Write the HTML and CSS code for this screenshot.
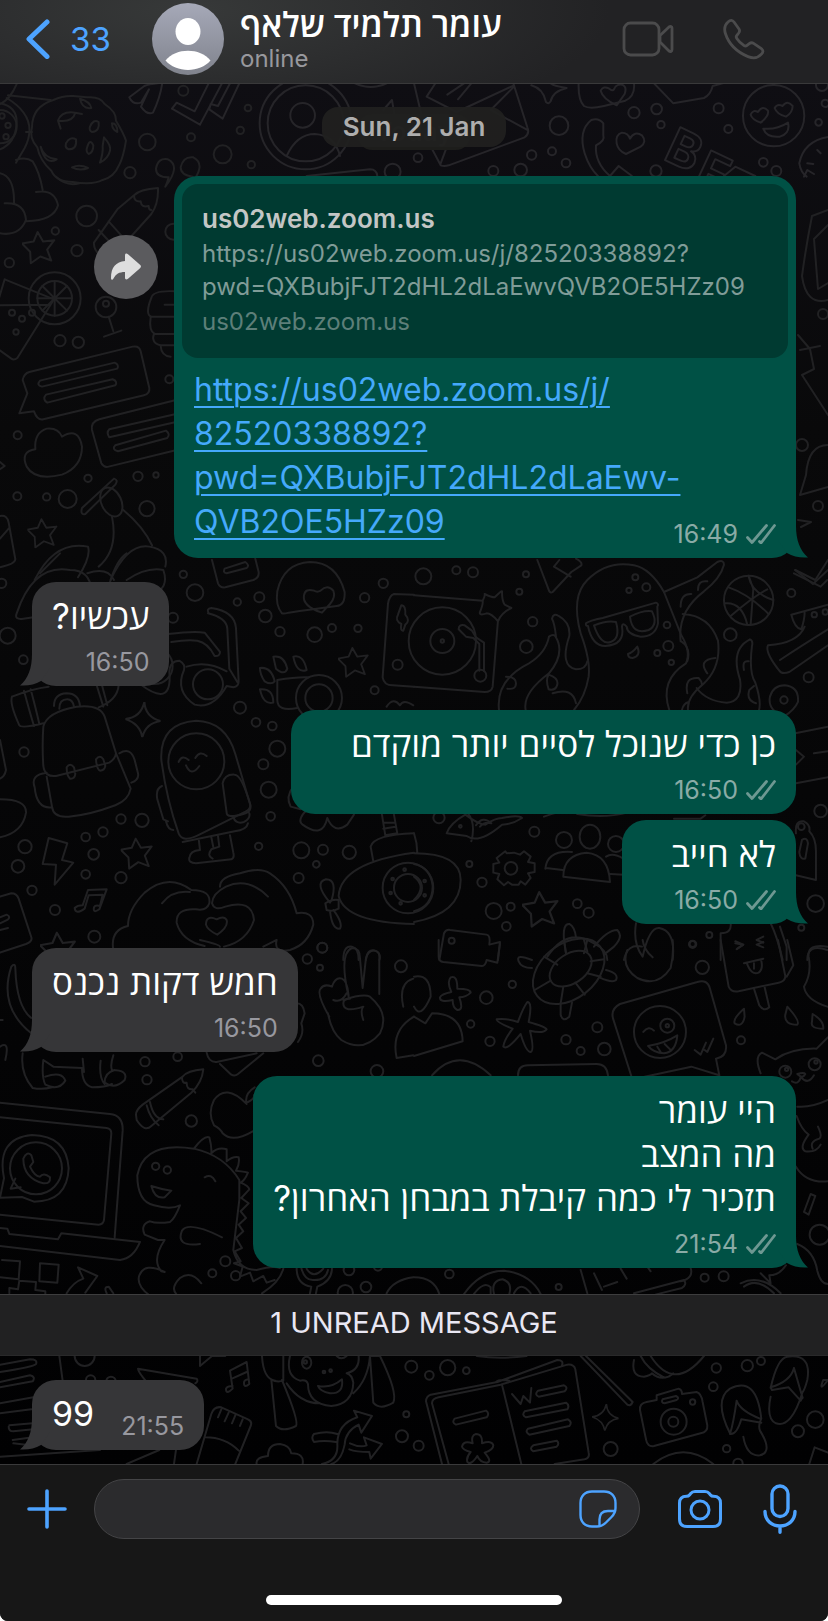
FILE: index.html
```html
<!DOCTYPE html>
<html lang="en">
<head>
<meta charset="utf-8">
<meta name="viewport" content="width=device-width, initial-scale=1">
<title>Chat</title>
<link rel="stylesheet" href="styles.css">
</head>
<body>
<svg class="defs" aria-hidden="true">
  <symbol id="ticks" viewBox="0 0 30 20"><path d="M1.500 13.500l4.500 5L20.500 1.500M13.500 17.500l1.500 1.500L28.500 1.500" fill="none" stroke="currentColor" stroke-width="2.800" stroke-linecap="round" stroke-linejoin="round"/></symbol>
  <symbol id="tail" viewBox="0 0 30 32"><path d="M18 0C18 14 22 25 30 31.500c-8 .5-15-.8-21-4.500L0 14V0z" fill="currentColor"/></symbol>
  <symbol id="star" viewBox="-50 -50 100 100" overflow="visible"><path d="M-4-46L12-18 45-22 24 6 36 38 4 26-24 46-26 12-50-12-16-18z"/></symbol>
  <symbol id="spark" viewBox="-50 -50 100 100" overflow="visible"><path d="M4-50Q6-8 50 4 8 10-2 50-8 12-50-2-6-6 4-50z"/></symbol>
</svg>
<div class="app">
  <header class="topbar">
    <a class="back" href="#">
      <svg width="26" height="40" viewBox="0 0 26 40" aria-hidden="true"><path d="M21 3L3 20l18 17.500" fill="none" stroke="currentColor" stroke-width="5" stroke-linecap="round" stroke-linejoin="round"/></svg>
      <span>33</span>
    </a>
    <svg class="avatar" viewBox="0 0 72 72" aria-hidden="true">
      <defs><linearGradient id="av" x2="0" y2="1"><stop stop-color="#a6a9b8"/><stop offset="1" stop-color="#80838d"/></linearGradient></defs>
      <circle cx="36" cy="36" r="36" fill="url(#av)"/>
      <ellipse cx="36" cy="28.500" rx="12.500" ry="13.500" fill="#fff"/>
      <path d="M13.500 57.500C24 44.500 48 44.500 58.500 57.500 48 70 24 70 13.500 57.500z" fill="#fff"/>
    </svg>
    <div class="contact">
      <h1 dir="rtl">עומר תלמיד שלאף</h1>
      <p>online</p>
    </div>
    <button class="icon" aria-label="Video call">
      <svg width="52" height="36" viewBox="0 0 52 36" fill="none" stroke="currentColor" stroke-width="2.800" stroke-linejoin="round"><rect x="2" y="2" width="35" height="32" rx="6.500"/><path d="M38 14.500l9-8.500c1.500-1 3-.5 3 1v21.500c0 2-1.500 2.500-3 1.500L38 21z"/></svg>
    </button>
    <button class="icon" aria-label="Voice call">
      <svg width="42" height="42" viewBox="0 0 42 42" fill="none" stroke="currentColor" stroke-width="2.800" stroke-linejoin="round"><path d="M5 4C7.500 1.500 9.500 2 11 4l5 7c1 1.500.8 2.500-.3 4l-2 2.600c-.8 1-.6 1.800.1 2.800 1.700 2.600 4.600 5.400 7.300 7.200 1 .6 1.700.7 2.600 0l2.600-2c1.600-1.200 2.800-1.200 4.300-.2l7.400 5c2.500 1.800 2.500 3.400.4 5.800-3.500 4-8 4.600-13.400 2.400C14 34 5.600 25.500 2.400 15.500 1 11 1.600 7 5 4z"/></svg>
    </button>
  </header>

  <main class="chat">
    <svg class="wallpaper" viewBox="0 84 828 1380" preserveAspectRatio="xMidYMin slice" aria-hidden="true">
      <g class="a" transform="scale(.3333)">
        <path d="M388 292l45-34q14-6 54-10-6 44-28 90-18 8-36-18l24-52-24 40q-24 8-35-16z"/>
        <path d="M626 250l-42 84-54-26-14 18 84 48 66-124M690 250l-36 68-22-6-4 16 40 28 50-106"/>
        <circle cx="917" cy="370" r="138"/><circle cx="917" cy="370" r="114"/><circle cx="908" cy="346" r="37"/><path d="M860 468q30-66 85-66 60 4 75 66"/>
        <circle cx="1178" cy="515" r="24"/><path d="M1065 250q48 22 95 0M920 528l190-20q20 0 22 20M1150 330l26-30 12 70"/>
      </g>
      <g class="b" transform="translate(414 0) scale(.3333)">
        <path d="M0 250l40 170 40 76q10 4 24 0l228-84q16-12 8-30L298 250M38 290l90 46 172-80M38 290l26-40M80 490l30-80M150 250l-50 34M172 250l-40 48M300 260l-70 70 110 60"/>
        <path d="M352 256q36 10 44 50 8 8 14-2 6-30 48-40-40-6-48-14"/>
        <path d="M494 250q-2 50 16 68 16 10 60 0l64-16q30-14 26-52"/><path d="M560 272q8-16 26-6 10 8 14 2 6-16 24-14 16 6 8 28l-24 34q-42-20-48-44z"/>
        <path d="M720 250l58 60 92-16q20-10 26-36l30-8"/>
        <circle cx="1079" cy="347" r="92"/><path d="M1010 344q6-16 22-8 14-22 30-4 4 16-22 36-26-10-30-24zM1082 324q8-14 24-6 14-20 30 0 0 20-20 32-28-8-34-26zM1048 386q40 4 74-18 8 32-24 42-40 4-50-24z"/>
        <path d="M588 528q-46-40-42-92 28-14 22-30v-36q-14-18-36-10-40 32-20 100 14 44 40 68M588 528l26-30 40 30"/><path d="M608 430q-4-26 16-32 18 0 24 18 14-24 36-10 16 20-4 34l-44 22q-24-10-28-32z"/>
        <text x="744" y="476" transform="rotate(25 744 476)">B</text><text x="836" y="546" transform="rotate(25 836 546)">F</text><path d="M930 528l34-28 60 28M1250 410q-80 10-94 80 4 26 22 40M1180 490l18 2M1210 450l10 10M1170 530l10-20 20 12"/>
        <circle cx="435" cy="377" r="28"/><circle cx="660" cy="338" r="17"/><circle cx="728" cy="327" r="16"/><circle cx="741" cy="374" r="11"/><circle cx="914" cy="325" r="15"/><circle cx="943" cy="387" r="12"/><circle cx="414" cy="454" r="12"/><circle cx="353" cy="465" r="14"/><circle cx="456" cy="489" r="13"/><circle cx="320" cy="510" r="19"/><circle cx="238" cy="513" r="15"/><circle cx="12" cy="473" r="13"/><circle cx="726" cy="513" r="17"/><circle cx="1048" cy="487" r="13"/><circle cx="1087" cy="513" r="15"/><circle cx="1214" cy="367" r="10"/><circle cx="1224" cy="255" r="18"/><circle cx="1234" cy="310" r="11"/>
      </g>
      <g class="c" transform="translate(0 80) scale(.3333)">
        <path d="M160 60q30-14 60-12l40 4q40-4 54 20 36 24 34 50 24 40 30 60-8 50-20 72-16 38-50 46-30 16-90 6-50 0-64-34-34-30-42-70-26-30-16-60 0-62 64-82z"/>
        <path d="M240 56q30 8 34 28-28 4-34-28zM174 122q10-30 52-24-8 30-52 24l8 24M226 98l20 4M270 140q10-24 26-14 4 28-20 30-10-4-6-16zM198 190q12-22 30-12 4 30-22 30-12-4-8-18zM262 200q8-26 18-4 0 22-14 26-10-6-4-22zM312 172q22 24 18 40-6 24-30 36 10-30 8-50zM122 200q10 34 48 38-34 20-48-38zM216 262q24-10 48 2-24 10-48-2zM336 130q16 0 16 26-16-6-16-26zM168 290q30 30 70 20"/>
        <path d="M50 12Q30 60-4 74M20 54q100 60 54 150l-26 44M24 46l128 14M78 156h18M0 70q52 10 50 60-4 60-50 78M48 240q30-10 50 4 20 30 30 86M0 280q44 10 42 90M14 370q60-4 64 50-20 50-78 40M108 336q56-10 66 40-12 46-94 48"/>
        <path d="M282 488l70-100 50-42q16-18 72-22 2 48-20 78l-54 60-70 80M296 450l50 54M326 424l54 60M402 346q0 20 20 18 2 20 24 14 0 12 8 12M282 488q-2 24 24 42"/>
        <path d="M14 598l148 60-110 176q-10 8-18 2L-8 806M-8 676l160-2M14 598l-20 66"/><circle cx="164" cy="655" r="78"/><circle cx="164" cy="655" r="52"/><path d="M164 603v104M112 655h104M127 618l74 74M201 618l-74 74"/>
        <circle cx="318" cy="681" r="31"/><circle cx="318" cy="671" r="9"/><path d="M326 710l14 44M312 770l52-18M528 634q-70-4-74 20-20 50 0 56h72M452 712q-6 40 12 50h60M462 762q-10 26 20 34h46M482 798q2 30 30 32M494 674h34"/>
        <path d="M68 900q4-20 20-24l310-76q20-4 24 14l26 110q2 18-16 22l-302 72q-18 4-28-24l-44 6 24-60zM120 902l224-54q14 6 8 18l-226 54q-18-4-6-18zM138 944l200-46q16 6 8 18l-204 52q-16-10-4-24z"/>
        <path d="M528 960l-230 58q-26 8-22 32l28 100q8 14 22 10l204-50M528 1002l-200 46q-10 10 0 24l200-46M346 1096l152-44q14 10 4 22l-148 40q-20-6-8-18z"/>
        <path d="M106 1108q-4-50 34-62 34-4 46 24 50-30 60 30 0 60-60 84-80 20-106-24-20-46 26-52z"/>
        <path d="M246 1284l96-88q14 4 4 18l-90 88q-16 4-10-18z"/><ellipse cx="334" cy="1266" rx="30" ry="46" transform="rotate(-25 334 1266)"/><path d="M336 1310q20 100-40 150M370 1290q60 50 86 106M0 1308q22-4 26 20l20 110q0 14-46 24M0 1376l28-32M104 1500q60-120 160-100 10 30-30 92M332 1500q50-110 116-100 60 10 48 60M262 1480q60-20 80 20"/>
        <svg x="66" y="452" width="102" height="102"><use href="#star"/></svg><svg x="82" y="1314" width="92" height="92"><use href="#star"/></svg>
        <path d="M496 320q6-12 10-28-38 0-38-26 6-34 36-28 40 20-8 82zM570 316q6-10 8-26-36-4-36-28 8-34 38-30 42 22-10 84zM0 1146l14 12-14 10"/>
        <circle cx="0" cy="140" r="50"/><circle cx="6" cy="108" r="8"/><circle cx="24" cy="136" r="8"/><circle cx="18" cy="170" r="8"/><circle cx="36" cy="698" r="9"/><circle cx="66" cy="716" r="9"/><circle cx="96" cy="698" r="9"/><circle cx="48" cy="756" r="8"/>
        <circle cx="442" cy="186" r="25"/><circle cx="550" cy="32" r="15"/><circle cx="573" cy="172" r="12"/><circle cx="744" cy="84" r="10"/><circle cx="721" cy="151" r="11"/><circle cx="668" cy="223" r="27"/><circle cx="754" cy="254" r="11"/><circle cx="390" cy="278" r="17"/><circle cx="260" cy="408" r="31"/><circle cx="166" cy="453" r="11"/><circle cx="231" cy="512" r="17"/><circle cx="28" cy="548" r="14"/><circle cx="180" cy="782" r="17"/><circle cx="235" cy="787" r="17"/><circle cx="520" cy="455" r="24"/><circle cx="508" cy="898" r="12"/><circle cx="53" cy="1066" r="12"/><circle cx="264" cy="1195" r="11"/><circle cx="414" cy="1189" r="14"/><circle cx="468" cy="1185" r="8"/><circle cx="52" cy="1249" r="12"/><circle cx="140" cy="1251" r="11"/><circle cx="203" cy="1257" r="27"/><circle cx="441" cy="1286" r="23"/>
      </g>
      <g class="right-edge" fill="none">
        <path d="M828 210l-16 6q-6 30-10 60 4 30 26 24M828 225l-14 14 4 50 10-6M798 335l12 14 4 20-12 6 26 40M800 350l20-4M828 445q-20 0-22 30l-6 20 28-8M798 520l13 2-10 5M828 570l-15 14-18-14"/>
        <circle cx="823" cy="314" r="5"/><circle cx="802" cy="445" r="6"/><circle cx="818" cy="506" r="5"/>
      </g>
      <g class="d" transform="translate(0 560) scale(.3333)">
        <path d="M50 160q50-150 160-130 60 0 64 60M50 160q-8 20 20 16l40-6M120 40l60-60M330 66Q350 0 380-20M380 60q60-40 110-30 14 40-10 60M636 0l18 70q6 14 22 12l84-22q18-6 16-24L766-4M674 26l62-20q14 10 4 18l-60 16q-12-2-6-14z"/>
        <path d="M846 160q-20-24-14-66Q850 10 930 6q80 0 104 90 2 40-24 42l-60 8q-60 8-84 12-14 4-20 2zM912 106q4-22 30-14 10 6 20 0 20-20 38 0 8 20-10 40l-24 26q-60-20-54-52z"/>
        <path d="M626 160q-8-14 8-16 70 10 74 60l8 160q0 16-16 18l-20-4q-40 70-96 56-60-40-32-104 6-16-14-28-28 0-30 34 10 110-88 36M624 160q56 14 58 46l6 120 24 40M560 320q60-20 120 14M504 222q80-10 110-4l46 58q0 14-16 12-20-40-52-46-30-4-78 4"/><circle cx="624" cy="373" r="45"/><circle cx="464" cy="318" r="54"/>
        <path d="M36 410q60-24 110-30M36 410q-8 20 22 86 6 10 72-6M72 392q16 60 30 106M92 388q16 60 26 104M290 376l20 64M306 376l16 60M356 376q-4 44-60 66M162 438q0-36 38-38 36 0 40 38M178 446q0-28 24-28 16 0 20 22"/>
        <path d="M130 500q10-44 100-60 70-8 84 30l34 110q-2 16-20 28l-160 40q-34 4-38-30-4-60 0-118zM140 650l16 90q4 34 50 30 60-4 140-34 40-16 46-50l-44-106M140 638q-50 6-36 44 6 64 50 60M358 580q34-20 46 20l10 40q4 20-20 28M200 622q10-16 22 0l4 20q-2 16-16 14-10-8-10-34zM288 598q12-16 22 0l6 20q-2 14-16 14-10-4-12-34z"/>
        <svg x="376" y="426" width="106" height="106"><use href="#spark"/></svg>
        <path d="M484 600q-6-110 104-118 90 2 118 100l44 150q4 14-12 22l-140 70q-50 26-62-4Q500 720 484 600z"/><circle cx="589" cy="604" r="84"/><path d="M536 606q10-24 30-6M586 594q14-24 34-6M558 616q16 36 40 2M486 678q-20 8-14 40l18 60 14 6M498 784q6 26 22 26M668 670q6-28 36-26 20 0 46 86 8 26-20 32-50 14-50-4zM700 770q6 24 32 16 20-10 16-26M744 790q-4 20-40 24l-156 32M596 836l4 34q-30 2-32 24-4 14 20 16l106-12q10-4 6-20l-10-52M634 832l6 30M654 828l4 32-24 8q-14 20 4 28"/>
        <path d="M146 834l56 16-16 50 34 8-56 66 4-60-40-2zM264 990l56-2-22 60q-20 14-16-6 4-8 18-4l8-34-42 2-12 40q-28 20-30-2 8-8 24-8z"/><svg x="362" y="832" width="98" height="98"><use href="#star"/></svg><svg x="120" y="1114" width="110" height="110"><use href="#star"/></svg>
        <path d="M340 1170q-10-60 44-72 0-50 50-100 70-60 140-8 60 0 54 40-8 24-40 18-60-4-58 40 14 54 84 70M486 1030q30-40 84-34M660 980q0-30 60-40 60-20 90 0 60 40 80 120 50-8 50 34-16 60-70 76-50 10-40-30l-40 20M804 1010q-60-60-126-30-40 20-42 50 8 24 40 10 80-24 86 40-20 64-90 80M618 1094q0-30 32-16 22-12 30 2 6 20-28 44-30-14-34-30z"/>
        <path d="M1204 136q14 0 12 28 16 18 0 30l-6 18q-10 2-6-20-20-10-10-28zM1242 104l-60-2q-14 4-18 30l-16 220q4 24 30 24l64 4"/>
        <path d="M832 360q60-10 94-8M832 360v60q0 36 60 24M820 290q32-6 42 36-8 22-34 0zM880 290q30-8 40 40-30 12-40-40zM780 324q34-4 44 40-10 12-30 0-14-20-14-40zM780 388q40-4 40 40-30 8-40-40z"/><circle cx="957" cy="414" r="69"/><circle cx="957" cy="414" r="41"/><svg x="1014" y="260" width="94" height="94"><use href="#star"/></svg>
        <path d="M880 680q-24 30-8 60l30 8M920 750q-30 30-12 44 60 44 74-20 20 50 60 20l20-30M1146 764l10 62 36-6-10-56M1150 788h36M1150 806l36-6M1242 820q-120 4-130 40l8 44M1242 878q-220 30-226 130 20 80 226 84"/><circle cx="1224" cy="984" r="76"/><circle cx="1224" cy="984" r="42"/><circle cx="1214" cy="929" r="4"/><circle cx="1178" cy="957" r="4"/><circle cx="1172" cy="999" r="4"/><circle cx="1202" cy="1030" r="4"/><path d="M990 1028q-50-60-12-70 36 0 16 66M1000 1050q30 40 20 56-24 4-30-54M976 1030q20-14 40-10v26q-20 10-36 4z"/>
        <path d="M0 540l18 90q-4 20-18 26M0 718q80 0 78 40-10 60-78 74M0 1010l34-10q16 0 22 16l38 116q4 12-16 20l-78 26M0 1072l20-8q14 6 2 16l-22 10M0 1110l24-6M1030 1200q0-44 26-40 20 4 20 40M1098 1200q4-36 28-28 16 4 12 28M1160 440q20-30 40-4 10-20 40 0"/>
        <circle cx="585" cy="98" r="25"/><circle cx="550" cy="43" r="11"/><circle cx="712" cy="126" r="11"/><circle cx="778" cy="112" r="15"/><circle cx="796" cy="168" r="19"/><circle cx="840" cy="215" r="14"/><circle cx="519" cy="173" r="15"/><circle cx="944" cy="224" r="22"/><circle cx="996" cy="204" r="12"/><circle cx="1074" cy="205" r="11"/><circle cx="1094" cy="113" r="14"/><circle cx="1150" cy="70" r="14"/><circle cx="1124" cy="391" r="12"/><circle cx="1193" cy="314" r="15"/><circle cx="720" cy="443" r="18"/><circle cx="768" cy="487" r="13"/><circle cx="817" cy="498" r="13"/><circle cx="832" cy="566" r="24"/><circle cx="790" cy="613" r="15"/><circle cx="806" cy="689" r="24"/><circle cx="812" cy="769" r="13"/><circle cx="776" cy="859" r="11"/><circle cx="904" cy="871" r="24"/><circle cx="969" cy="869" r="15"/><circle cx="1048" cy="877" r="20"/><circle cx="949" cy="913" r="10"/><circle cx="896" cy="954" r="15"/><circle cx="967" cy="1163" r="15"/><circle cx="23" cy="227" r="24"/><circle cx="70" cy="299" r="13"/><circle cx="72" cy="576" r="14"/><circle cx="5" cy="70" r="14"/><circle cx="75" cy="860" r="20"/><circle cx="257" cy="831" r="13"/><circle cx="309" cy="816" r="14"/><circle cx="363" cy="777" r="14"/><circle cx="426" cy="781" r="20"/><circle cx="281" cy="883" r="16"/><circle cx="54" cy="919" r="19"/><circle cx="257" cy="943" r="13"/><circle cx="363" cy="953" r="17"/><circle cx="96" cy="991" r="14"/><circle cx="165" cy="1050" r="15"/><circle cx="283" cy="1130" r="18"/>
      </g>
      <g class="e" transform="translate(414 560) scale(.3333)">
        <path d="M0 106l206 16q8-14 6-20 20 10 30 10 20-20 22-18 0 30 8 40l20 10q-30 14-40 40-20-24-34-24-24 8-20-4 10-24 8-34M252 180l-16 200q-4 16-24 16L0 380"/><circle cx="85" cy="243" r="101"/><circle cx="85" cy="243" r="36"/><circle cx="85" cy="243" r="5"/><path d="M134 208q0-16 18-12l22 16 12 20 24 16v86M134 208l22 22 22 4 18 18v80"/><circle cx="199" cy="347" r="18"/>
        <path d="M500 220q-30-110 20-160 60-60 140-44 50 10 90 80l52 130q30 50 14 84-80 50-50 140M500 220q30 80 24 130-10 60-44 100M516 190q10-8 50-16l160-46q10 4 4 12l2 50q-8 40-52 40-40-6-42-30-12-14-14 0 10 54-50 58-40 0-52-60-8 0-6-8zM540 196q40-16 66-10 14 50-16 60-30 10-50-50zM648 170q40-20 66-16 20 40-10 56-50 16-56-40zM642 282q14-4 28-22 12 28-14 34-14 0-14-12z"/>
        <path d="M255 450q-10-90 90-140 50-30 60-80 14-10 20 0 30 50-20 110-80 60-70 110M426 230q-4-40-12-54 4-18 20-8 36 20 32 60-30 90 20 100 30 0 34-24M750 96l100-44 60-46q20-8 20 8-10 40-60 80-80 60-70 150M806 162q80 4 106 80 10 80-44 130-50 40-46 78M848 384q30 40 90 44 50-4 40-70-30-90 30-120 10 4 6 20-10 80 10 110 20 60 10 86M276 350q30 0 30 20 0 20-26 16M404 344q30 10 26 30-6 20-26 14-10-30 0-44M416 400q60-20 70 30M800 140q0-40 32-38M852 90q0-30 28-26M880 340q-30-40 24-46M820 400q-10-50 34-46 10 10 10 20M990 330q-6-30 14-26M1026 430q-30-10-20-40l14-12M802 244q30 20 18 60M804 450q4-20 20-24"/>
        <circle cx="664" cy="52" r="9"/><circle cx="697" cy="82" r="12"/><circle cx="645" cy="91" r="8"/><circle cx="759" cy="195" r="10"/><circle cx="763" cy="258" r="15"/><circle cx="730" cy="279" r="9"/><circle cx="772" cy="307" r="8"/>
        <circle cx="1004" cy="121" r="74"/><path d="M944 82q60 20 120 80M950 168q70-60 110-80M1004 47l14 40-8 108M934 130q50-4 66 64M1004 50q10 50 74 70"/>
        <path d="M370 0l36 94q4 6 10 2l56-60 30-20q4-10-16-20M436 0l-16 20 50 30M1144 30l60 30 38-60M1140 40l80 40 20-20M1132 164l110-30M1132 164q10 40 30 44 10-30 10-50M1172 200q-20 50-110 56-10 20 34 76 8 12 30 4l116-80M1098 300q60-40 144-92M1110 470q-50-20-42-60 10-34 44-34 44 4 40 50-10 24-42 44z"/><circle cx="1110" cy="420" r="11"/><circle cx="1201" cy="164" r="8"/><circle cx="1234" cy="156" r="8"/>
        <path d="M1144 520l98-20M1146 570l24 20-24 24M1200 580l42-6M1146 670l96-18M1146 820q-4-40 24-36 20 10 16 30 20 20 20 60 0 60 0 86l-60-14M1164 840q16-10 18 10l-8 46q-16 4-18-20z"/><circle cx="1162" cy="800" r="10"/>
        <path d="M98 820q10-30 56-56 40 30 60 30 30-20 50-20 50-10 60 0-30 20-60 20-70 60-106 34zM162 760q24 30 10 84M186 796q20-30 46-6-20-6-34 10M390 770q80-30 100-8 80 14 150-4M780 776l80 0 14-10"/><circle cx="139" cy="799" r="4"/>
        <circle cx="450" cy="840" r="24"/><ellipse cx="528" cy="830" rx="31" ry="36"/><circle cx="606" cy="852" r="24"/><path d="M394 926q6-56 80-50M396 924l50 6M576 890q20-14 52 6M630 944l-40-2M448 950q0-66 70-72 66 6 70 88z"/>
        <circle cx="291" cy="925" r="19"/><path d="M278 880l-4-6-26 20 8 14-18 4v26l18 4-6 16 20 18 12-10 12 8h20l6-10 14 10 16-20-8-14 20-4v-26l-20-4 8-16-20-16-12 10-18-6z"/>
        <path d="M0 820q10 30 10 60M0 880q140 0 140 80 0 100-140 126M0 912q50 10 56 66 0 60-56 76M0 950q40 30 0 70"/><circle cx="32" cy="963" r="4"/><circle cx="32" cy="1006" r="4"/>
        <svg x="324" y="986" width="112" height="124"><use href="#star"/></svg>
        <path d="M76 1200l14-80q6-12 18-10l110 14q12 2 8 30l32-8-6 54"/><circle cx="113" cy="1142" r="9"/><path d="M450 1140q-4-50 16-48 16 8 20 40M540 1160q40-50 70-50 20 20-10 50l-30 24M400 1190q60-90 140-40 40 20 40 50M520 1140l-10 40M450 1140l6 40M666 1090q-10 60 20 100 20-90 50-86 50 10 40 96M630 1200q10-50 54-40M950 1090q4 30-30 30v80M1070 1090q20 40 36 110M1098 1100l20 60v40M964 1144l24 10-20 14M1048 1130l-20 10 20 8M1180 1200q0-50 60-30"/>
        <circle cx="28" cy="49" r="24"/><circle cx="127" cy="31" r="12"/><circle cx="177" cy="37" r="15"/><circle cx="336" cy="43" r="9"/><circle cx="316" cy="95" r="9"/><circle cx="356" cy="185" r="14"/><circle cx="337" cy="260" r="19"/><circle cx="1132" cy="99" r="12"/><circle cx="949" cy="224" r="19"/><circle cx="1184" cy="352" r="15"/><circle cx="75" cy="773" r="17"/><circle cx="361" cy="815" r="15"/><circle cx="166" cy="912" r="9"/><circle cx="204" cy="967" r="14"/><circle cx="239" cy="1053" r="24"/><circle cx="290" cy="1040" r="12"/><circle cx="490" cy="1031" r="13"/><circle cx="524" cy="1058" r="15"/><circle cx="277" cy="1099" r="13"/><circle cx="1205" cy="1031" r="25"/><circle cx="1220" cy="753" r="19"/><circle cx="1162" cy="1103" r="9"/><circle cx="836" cy="1153" r="11"/><circle cx="886" cy="1125" r="9"/>
      </g>
      <g class="f" transform="translate(0 940) scale(.3333)">
        <path d="M94 234Q50 200 46 86q0-20-12-6-40 120 60 200M68 340q-8 60 30 104 30 6 58-2M130 360q-6 50 6 74 40 20 60-12-10-30-60-12M130 360l30 20 86 4q0 50 30 58 40 0 60-10M248 356l4 40M302 362q-6 50 12 70M340 346q-10 30-4 44 50 0 38 30-30 30-60 8 0-30 30-38M0 320q30-20 16 40M0 240h8"/>
        <path d="M620 338q6 30 30 28l120-26M660 372l34 32q10 6 20-2l76-62M890 190q20 0 24 30l-10 30q10 30-10 56"/>
        <path d="M1046 170q-30-130 10-146 24 0 24 30l8 90 10-90q8-24 26-22 20 6 14 30v100M988 230q-40-70-26-84 10-16 34-6 10-30 30-24 16 6 20 50M1000 180q24 10 40-20M1030 180q60-20 80-10 60 50 30 110-50 60-116 20-30-24-40-80M1090 240q-10-30 0-40-60 20-60-10 0-14 20-14M1210 200q-16-70 30-84M1242 230q-70 40-52 124l50-8M600 0q60 14 60 20"/>
        <path d="M408 524q0-14 20-30L548 410q14-18 62-22-4 40-36 70l-120 100q-20 20-44-18zM546 412q0 20 14 16 0 22 18 20l8 10M450 486q10 50 40 52M440 496q10 40 36 60"/>
        <path d="M738 490q-60-60-96-10-20 40 0 76 20 10 26 24 30 30 90-6M740 492q-8-30 24-50M744 486q20-10 18-20"/>
        <path d="M0 488l330 34q40 4 38 50l-24 320M0 532l320 32q14 2 14 16l-22 260q-2 14-16 14L0 824M0 918l360 42q40-4 60-54L184 880l-10 18-146-16-6-16-22-2"/>
        <circle cx="108" cy="685" r="78"/><path d="M12 715q-24-120 84-130 104 2 110 100-4 100-104 100l-36-14-66 2zM32 746l14-30M32 746l30-4"/><path d="M70 656q10-24 24-10l6 20-10 14q14 30 30 30 10-14 30 2 2 20-20 18-60-16-60-74z"/>
        <path d="M582 626q30-40 46-34 8 30 6 48 20-20 46-12v36q20-16 36-12 4 20-8 40 34 4 36 6-10 24-22 30 24 10 26 20l-24 26 22 16-24 24 16 20-22 20 14 20-22 20 18 30-22 10 18 30-20 6 26 10-8 30 30-12 10 26 30-16 10 20 24-8M582 626q-150-24-170 80 0 80 50 90 50 14 78 0-16 40-30 50-40 6-60-2-30 10-16 40l40 16 20 0q-40 60-10 94l10 2M582 626q90 20 136 94l0 60-18 150q14 60 70 60 50-14 70-6M454 738q10 40 40 34l20-20q-30-4-60-14zM614 712q20-12 32 12M666 892q-100-50-120-20-20 50 54 40M494 996q-60-30-76 10-10 30 30 60M604 1030q-30-40-64-16-30 30-10 50M850 986q-10 40-64 74"/><circle cx="467" cy="679" r="11"/><circle cx="502" cy="690" r="11"/>
        <path d="M6 960l54 4-4 54-56-6M120 970l56 4-4 54-54-4zM28 1060v-16l26 4 4-26 50 4-2 24 30 4v10M200 1060q20-34 50-44l-16-34 58 26-36 50M320 1060q-10-20 6-20l14 20"/>
        <path d="M890 984q0 50 44 56l-4 20M996 984q0 40-44 56l-4 20M904 984q10 40 40 36 34 0 40-30M920 986q20 34 50 0M1160 1060q20-40 80-48"/>
        <circle cx="435" cy="365" r="14"/><circle cx="533" cy="350" r="13"/><circle cx="441" cy="419" r="14"/><circle cx="574" cy="543" r="17"/><circle cx="676" cy="964" r="15"/><circle cx="637" cy="1000" r="12"/><circle cx="707" cy="1007" r="14"/><circle cx="922" cy="57" r="14"/><circle cx="967" cy="23" r="15"/><circle cx="960" cy="83" r="9"/><circle cx="1203" cy="79" r="18"/><circle cx="955" cy="362" r="16"/><circle cx="1131" cy="394" r="19"/><circle cx="1047" cy="990" r="16"/><circle cx="1098" cy="1041" r="16"/><circle cx="1036" cy="1058" r="23"/><circle cx="1134" cy="980" r="12"/>
      </g>
      <g class="g" transform="translate(414 940) scale(.3333)">
        <path d="M74 0v50q0 14 14 16l116 12q10 0 14-18l32 8 8-58"/>
        <ellipse cx="464" cy="94" rx="120" ry="82" transform="rotate(-38 464 94)"/><ellipse cx="470" cy="86" rx="70" ry="44" transform="rotate(-34 470 86)"/><path d="M354 60q-50-20-40 4 8 20 40 20M576 90q40 10 30 30-10 10-50-8M440 190v34q6 24 26 6l8-42M362 150l48-28M440 190l8-50M512 164l-28-36M560 110l-40-10M570 58l-40 6M510 0l10 34M450 0l6 40M390 50l40 24M640 30q-20 50 30 84 60 30 100-30 10-40 6-84M686 0q4 30 30 52"/>
        <path d="M110 112q20-8 20 34 40 0 40 12-14 14-34 14 14 40-6 38-14-6-14-30-40 8-38-8 4-10 34-16-14-30-2-44zM0 110q50-10 50 60-30 70-50 30M0 230l34 20 20-30q90 0 92 84l-146 44"/>
        <path d="M340 186q16 0 4 60 50 14 54 22-10 14-50 4 14 60 2 64-14 0-30-54-40 50-52 38 2-20 28-54-50-20-48-28 30-4 64 8 14-40 28-60z"/>
        <path d="M652 408l-54-170q-10-30 20-46l232-66q30-10 38 20l48 170q4 34-30 40l10 50-84-26-140 30"/><circle cx="738" cy="276" r="78"/><circle cx="760" cy="257" r="21"/><circle cx="760" cy="257" r="5"/><path d="M688 276q16-20 32-4M702 318q50-8 88-32-4 50-40 54-30 0-48-22zM730 320l10 16M752 312l20 20M842 330l18 14 16-36M872 330l8 6 18-40"/>
        <path d="M920 0l24 140q8 18 30 14l120-26q20-4 20-20L1092 0M1120 0l18 76-20 34M1020 146l16 50q14 20 30 6l-14-60M990 70l58-14M998 68q14 40 36 30 14-10 8-36M1020 70v16M964 10l24 4-18 12M1048 6l-20 8 20 8"/>
        <path d="M990 206q-34 30-28 44 24 14 30-20zM1120 200q40 44 30 54-40 0-36-30zM1196 222q34 20 32 44-40 0-34-20zM1240 20q-60-10-56 30 10 50-14 90 6 40 70 60"/>
        <path d="M1040 400q-20-50 4-62l40 20q50-34 124-32l34-34M1150 500q40 4 92-20M1148 528q14 40 36 56-30 40-10 50 34 4 46-20M1212 560q14 30 4 36-30 8-20 30M1146 680q30 50 96 44M1190 762l14 6-20 56-14-8zM1150 912q50 20 60 80 10 40 32 40"/><circle cx="1114" cy="395" r="18"/><circle cx="1202" cy="373" r="18"/><circle cx="1118" cy="388" r="5"/><circle cx="1206" cy="366" r="5"/><path d="M1150 402q20-6 24 0-8 16-24 0zM1160 412q-6 24-26 12M1162 412q20 24 38-6"/>
        <path d="M54 406q80-90 176 0M312 406q0-30 30-30l206-4q30 0 34 34"/>
        <path d="M0 1012q60 0 76 50M150 1062q50-70 120-70 80 10 110 70M180 1062q30-40 50-20v20M240 1062q-10-40 26-44 30 10 20 44M300 1060q20-40 50 0M500 990l20 70M540 1000l24 50M620 986l18 30M700 980l10 14M570 1040l40-14M660 1060l150-40q10 14-6 24l-80 20M830 984q10 30-30 40M980 1030q60-30 120 30M990 1040q40-30 90 20M1040 1000l30 30-4-24q30 0 50-30"/>
        <circle cx="836" cy="12" r="9"/><circle cx="865" cy="82" r="20"/><circle cx="295" cy="133" r="11"/><circle cx="217" cy="173" r="19"/><circle cx="170" cy="252" r="11"/><circle cx="228" cy="304" r="14"/><circle cx="550" cy="262" r="15"/><circle cx="456" cy="299" r="14"/><circle cx="500" cy="333" r="12"/><circle cx="571" cy="327" r="19"/><circle cx="981" cy="301" r="12"/><circle cx="1217" cy="884" r="30"/><circle cx="106" cy="1002" r="13"/><circle cx="434" cy="1041" r="9"/><circle cx="872" cy="1013" r="12"/><circle cx="929" cy="1009" r="15"/>
      </g>
      <g class="h" transform="translate(0 1280) scale(.3333)">
        <path d="M0 254l90-16q24 0 18 14-4 8-108 24M0 306l90-20q18 4 8 18L0 322M0 370l100-18M28 436l70-6M26 440q0 14 14 14l60-6M38 480l60-8M40 490l50 6M0 400l94-12M0 530l300-20M178 228l12 90M380 552l98-42M528 510l-6 42M414 266l176 30q6 8-4 14M414 266q0 10 30 44M600 228v30l36-30h40"/>
        <path d="M690 272l50-26 8 66q-16 14-16-4 0-8 14-10M696 296l44-20M690 272l8 54q-20 20-20 0 4-8 20-8"/>
        <path d="M786 228q4 70 40 74M850 228v74q-20 6-36-4l14 140q20 20 60 0 10-14-42-138M870 228q-14 60 30 74 20-4 24 10 0 60 70 66 64-6 66-70-4-24-20-28 40-10 36-52M860 310q40 60 100 60M1060 340q44-40 50-112M1110 228l10 140q20 24 60 0 14-30-40-140zM954 318q40 8 72-20 6 44-36 42-30-6-36-22z"/><ellipse cx="920" cy="248" rx="14" ry="18"/><circle cx="916" cy="246" r="5"/><circle cx="972" cy="276" r="4"/><circle cx="992" cy="272" r="4"/><path d="M1010 228q14 14 30 0"/>
        <path d="M590 552l44-150q8-24 30-20l80 36q14 6 8 20l-46 114M616 472q60 0 100 40M664 388l-10 24M686 398l-12 26M706 406l-10 24M728 418l-8 20M770 552q-4-20 34-24 0-36 36-36 30 4 34 28 40 0 34 32"/>
        <path d="M966 552q50-10 46-60 0-60 60-80l-10-20 54 16-32 50-8-24q-40 20-42 60-10 50-40 58M1012 462q-30-10-70 0-10 10 0 24 30-6 66 0M1050 490q30 14 50 6l-8-24 54 20-34 44-4-20q-40 0-60-8"/>
        <circle cx="254" cy="228" r="30"/><circle cx="272" cy="300" r="14"/><circle cx="333" cy="304" r="14"/><circle cx="1219" cy="403" r="9"/><circle cx="1206" cy="469" r="18"/><circle cx="1234" cy="260" r="18"/>
      </g>
      <g class="i" transform="translate(414 1280) scale(.3333)">
        <path d="M84 552L36 364q0-14 14-20l200-38 180-66q20 0 14 16M104 552L54 370q0-14 20-18l186-38 200-60q20-2 24 14l40 250q4 16-12 20l-90 14M264 314l58 238M246 306q10-10 40-4"/><path d="M122 416l94-24q12 8 2 20l-92 22q-14-6-4-18zM372 332l78-16q14 6 2 18l-78 16q-14-6-2-18zM332 394l124-26q12 8 4 20l-124 24q-14-6-4-18zM342 446l120-28q14 8 4 20l-120 26q-14-8-4-18zM358 496l70-14q10 8 0 18l-70 14q-14-8 0-18z"/>
        <path d="M294 342l26 30 8-24 20 20 4-44"/>
        <path d="M176 490q-6-24 10-28 20 0 18 28 30-10 34 6 0 14-26 22 24 28 6 30-20 0-28-20-20 30-30 18-4-14 10-30-24-6-26-16 4-20 32-10z"/>
        <svg x="534" y="372" width="80" height="80"><use href="#spark"/></svg><path d="M500 228l140 146q10 6 16-8L516 228M188 228q70 10 150 0M660 240q-10 50 30 50 20-4 24-10 20 20 50 10l14-10M680 228q20 40 70 64M710 228q70 110 160 0"/>
        <path d="M678 390q-2-20 20-24l30-6v-14l66-20q10 2 10 16l44-6q14 4 18 30l14 70q2 20-20 24l-140 38q-20 4-24-20zM746 358l40-10q12 6 2 12l-36 10q-12-2-6-12z"/><circle cx="779" cy="425" r="39"/><circle cx="778" cy="425" r="15"/><circle cx="836" cy="366" r="8"/>
        <path d="M948 460q-50-100 0-134 80-40 94 90-10 20-4 36 40 64 0 74-40 4-50-56M968 362q-10 70-20 100 20 4 34-44l60 10M968 362q10 30 70 54M1070 324q20-90 50-94 74-10 60 70-8 30-14 36-34 110-80 94-30-14-16-80M1140 264q-10 40-70 58l4 8 50-8 36 40 6-10M1140 264l26 90"/>
        <path d="M718 552q90-70 180 0M1186 552l16-50 40 16M1242 300q-30 40-14 0z"/>
        <circle cx="46" cy="286" r="13"/><circle cx="101" cy="263" r="23"/><circle cx="157" cy="272" r="10"/><circle cx="14" cy="497" r="15"/><circle cx="590" cy="507" r="21"/><circle cx="907" cy="264" r="14"/><circle cx="898" cy="320" r="13"/><circle cx="1000" cy="257" r="17"/><circle cx="1041" cy="243" r="12"/><circle cx="938" cy="506" r="11"/><circle cx="1152" cy="454" r="18"/><circle cx="1204" cy="419" r="25"/><circle cx="972" cy="550" r="14"/>
      </g>
    </svg>

    <div class="date"><span class="ghost">Today</span><span class="pill">Sun, 21 Jan</span></div>

    <div class="group out">
      <article class="bubble link-bubble">
        <button class="forward" aria-label="Forward"><svg width="32" height="28" viewBox="0 0 32 28" aria-hidden="true"><path d="M15 2.500c0-2 1.500-2.500 3-1.200l12 10.500c1.300 1.200 1.300 2.200 0 3.400l-12 10.600c-1.500 1.200-3 .7-3-1V19C9 19 6 21 3.500 25.500 2.500 27.500 1 27 1 25 1 14 6 9 15 8z" fill="currentColor"/></svg></button>
        <a class="preview" href="#">
          <strong>us02web.zoom.us</strong>
          <span>https://us02web.zoom.us/j/82520338892?<br>pwd=QXBubjFJT2dHL2dLaEwvQVB2OE5HZz09</span>
          <small>us02web.zoom.us</small>
        </a>
        <div class="overlay">
          <a class="url" href="#">https://us02web.zoom.us/j/<br>82520338892?<br>pwd=QXBubjFJT2dHL2dLaEwv-<br>QVB2OE5HZz09</a>
          <div class="meta"><time>16:49</time><svg class="ticks"><use href="#ticks"/></svg></div>
        </div>
        <svg class="tail"><use href="#tail"/></svg>
      </article>
    </div>

    <div class="group in">
      <article class="bubble"><p dir="rtl">עכשיו?</p><div class="meta"><time>16:50</time></div><svg class="tail"><use href="#tail"/></svg></article>
    </div>

    <div class="group out">
      <article class="bubble wide"><p dir="rtl">כן כדי שנוכל לסיים יותר מוקדם</p><div class="meta"><time>16:50</time><svg class="ticks"><use href="#ticks"/></svg></div></article>
      <article class="bubble roomy"><p dir="rtl">לא חייב</p><div class="meta"><time>16:50</time><svg class="ticks"><use href="#ticks"/></svg></div><svg class="tail"><use href="#tail"/></svg></article>
    </div>

    <div class="group in">
      <article class="bubble"><p dir="rtl">חמש דקות נכנס</p><div class="meta"><time>16:50</time></div><svg class="tail"><use href="#tail"/></svg></article>
    </div>

    <div class="group out">
      <article class="bubble"><p dir="rtl">היי עומר<br>מה המצב<br>תזכיר לי כמה קיבלת במבחן האחרון?</p><div class="meta"><time>21:54</time><svg class="ticks"><use href="#ticks"/></svg></div><svg class="tail"><use href="#tail"/></svg></article>
    </div>

    <div class="unread">1 UNREAD MESSAGE</div>

    <div class="group in">
      <article class="bubble short"><p>99</p><div class="meta"><time>21:55</time></div><svg class="tail"><use href="#tail"/></svg></article>
    </div>
  </main>

  <footer class="composer">
    <div class="tools">
      <button class="blue" aria-label="Attach"><svg width="40" height="40" viewBox="0 0 40 40" stroke="currentColor" stroke-width="3.600" stroke-linecap="round"><path d="M2 20h36M20 2v36"/></svg></button>
      <div class="field">
        <input type="text" aria-label="Message">
        <button class="blue" aria-label="Stickers"><svg width="38" height="38" viewBox="0 0 38 38" fill="none" stroke="currentColor" stroke-width="2.400" stroke-linejoin="round"><path d="M13 1.500h12C32 1.500 36.500 6 36.500 13v5c0 4-1 6-4 9l-5.500 5.500c-3 3-5.500 4-9 4h-5C6 36.500 1.500 32 1.500 25V13C1.500 6 6 1.500 13 1.500z"/><path d="M36 21h-7c-5.500 0-8.500 3-8.500 8.500V36"/></svg></button>
      </div>
      <button class="blue camera" aria-label="Camera"><svg width="44" height="38" viewBox="0 0 44 38" fill="none" stroke="currentColor" stroke-width="3" stroke-linejoin="round"><path d="M17 1.500h10c2 0 3.200.6 4.300 2L32.500 5c.8 1 1.600 1.300 3 1.300 4.500 0 7 2.500 7 7V29c0 5-2.500 7.500-7.500 7.500H9c-5 0-7.500-2.500-7.500-7.500V13.300c0-4.500 2.500-7 7-7 1.400 0 2.200-.3 3-1.300l1.200-1.500c1.100-1.400 2.300-2 4.300-2z"/><circle cx="22" cy="20" r="9"/></svg></button>
      <button class="blue" aria-label="Voice message"><svg width="34" height="50" viewBox="0 0 34 50" fill="none" stroke="currentColor" stroke-width="3.400" stroke-linecap="round"><rect x="9" y="2" width="16" height="30.500" rx="8"/><path d="M2 27.500c0 8.500 6.500 14.500 15 14.500s15-6 15-14.500M17 42v6.300"/></svg></button>
    </div>
    <div class="home"></div>
  </footer>
</div>
</body>
</html>
```
FILE: styles.css
```css
* { box-sizing: border-box; }

body {
  margin: 0;
  background: #fff;
  color: #fff;
  font-family: Inter, "Open Sans", "Liberation Sans", sans-serif;
}

h1, p { margin: 0; }
a { color: inherit; text-decoration: none; }

button {
  display: grid;
  place-items: center;
  padding: 0;
  border: 0;
  background: none;
  color: inherit;
}

svg { flex: none; }

.defs {
  position: absolute;
  width: 0;
  height: 0;
}

.app {
  display: flex;
  flex-direction: column;
  min-height: 100vh;
  overflow: hidden;
  border-radius: 0 0 8px 8px;
  background: #171717;
}

.topbar {
  display: flex;
  align-items: center;
  height: 84px;
  padding: 0 63px 6px 26px;
  border-bottom: 1px solid #39393a;
  background: radial-gradient(ellipse 420px 130px at 190px 10px, #373939, #222224);
}

.back {
  display: flex;
  align-items: center;
  gap: 18px;
  width: 126px;
  color: #4da3ff;
  font-size: 33px;
}

.avatar {
  width: 72px;
  height: 72px;
}

.contact {
  flex: 1;
  margin-left: 16px;
}

.contact h1 {
  font-size: 34px;
  font-weight: 600;
  line-height: 40px;
  text-align: left;
}

.contact p {
  color: #98989d;
  font-size: 24px;
  line-height: 28px;
}

.icon {
  margin-left: 49px;
  color: #4b4b4c;
}

.chat {
  position: relative;
  flex: 1;
  display: flex;
  flex-direction: column;
  gap: 24px;
  padding: 23px 0 14px;
  background: linear-gradient(#0f0e13, #09090a 25%, #050506 60%, #010102);
}

.chat > * { position: relative; }

.chat > .wallpaper {
  position: absolute;
  inset: 0;
  width: 100%;
  height: 100%;
}

.wallpaper g {
  fill: none;
  stroke: #212123;
  stroke-width: 6;
  stroke-linecap: round;
  stroke-linejoin: round;
}

.wallpaper .right-edge { stroke-width: 2; }
.wallpaper .a, .wallpaper .b { stroke: #262529; }

.wallpaper text {
  font-size: 150px;
  font-weight: 700;
}

.date {
  align-self: center;
  margin-bottom: 5px;
  font-size: 26px;
  font-weight: 600;
}

.pill {
  position: relative;
  display: block;
  padding: 0 21px;
  border-radius: 16px;
  background: rgba(32, 32, 31, .93);
  color: #aeaeae;
  line-height: 40px;
}

.ghost {
  position: absolute;
  right: 36px;
  bottom: -3px;
  left: 36px;
  border-radius: 14px;
  background: #1d1d1b;
  color: #3a3a39;
  line-height: 36px;
  text-align: center;
}

.group {
  display: flex;
  flex-direction: column;
  align-items: flex-start;
  gap: 6px;
  padding: 0 32px;
}

.bubble {
  position: relative;
  max-width: 100%;
  padding: 12px 20px 10px;
  border-radius: 24px;
  background: #363638;
  font-size: 32px;
  line-height: 44px;
}

.bubble p { font-size: 35px; }

.out { align-items: flex-end; }
.out .bubble { background: #005145; }
.out .wide { padding-left: 60px; }
.out .roomy { padding-left: 50px; }

.meta {
  display: flex;
  align-items: center;
  justify-content: flex-end;
  gap: 8px;
  margin-top: 9px;
  margin-bottom: -1px;
  color: #98989f;
  font-size: 25px;
  line-height: 30px;
}

.out .meta { color: #8aaba6; }

.ticks {
  width: 30px;
  height: 20px;
  color: #6d9892;
}

.tail {
  position: absolute;
  bottom: 0;
  left: -12px;
  width: 30px;
  height: 32px;
  color: #363638;
  transform: scaleX(-1);
}

.out .tail {
  right: -12px;
  left: auto;
  color: #005145;
  transform: none;
}

.out .link-bubble {
  width: 622px;
  max-width: 88%;
  padding: 8px 8px 0;
}

.forward {
  position: absolute;
  top: 59px;
  left: -80px;
  width: 64px;
  height: 64px;
  border-radius: 50%;
  background: #5b5b5e;
  color: #dedede;
}

.preview {
  display: flex;
  flex-direction: column;
  min-height: 174px;
  padding: 17px 20px;
  border-radius: 16px;
  background: #003a31;
  color: #809c98;
  font-size: 24px;
  line-height: 33px;
}

.preview strong {
  color: #c3c6c5;
  font-size: 26px;
  font-weight: 600;
  line-height: 36px;
}

.preview small {
  margin-top: 2px;
  color: #5d7f79;
  font-size: 24px;
}

.overlay {
  display: grid;
  padding: 10px 12px;
}

.overlay > * { grid-area: 1 / 1; }

.overlay .meta {
  place-self: end;
  margin: 0 0 -1px;
}

.url {
  margin-bottom: 4px;
  color: #45a9fb;
  text-decoration: underline;
  text-decoration-thickness: 2px;
  text-underline-offset: 5px;
}

.short {
  display: flex;
  align-items: flex-end;
  gap: 27px;
}

.short p { margin-bottom: 4px; }
.bubble.short p { font-size: 34px; }
.short .meta { margin: 0 0 -1px; }

.unread {
  margin-top: 2px;
  padding-bottom: 4px;
  border-top: 1px solid #3d3d3e;
  border-bottom: 1px solid #29292a;
  background: #212122;
  color: #e9e7f3;
  font-size: 29px;
  line-height: 56px;
  text-align: center;
}

.composer {
  height: 157px;
  padding-top: 14px;
  border-top: 1px solid #3a3a3b;
  background: #171717;
}

.tools {
  display: flex;
  align-items: center;
  padding: 0 31px 0 27px;
}

.blue { color: #4da3ff; }

.field {
  flex: 1;
  display: flex;
  align-items: center;
  min-width: 0;
  height: 60px;
  margin: 0 38px 0 27px;
  padding: 0 22px 0 28px;
  border: 1px solid #444446;
  border-radius: 30px;
  background: #2b2b2d;
}

.field input {
  flex: 1;
  min-width: 0;
  border: 0;
  outline: 0;
  background: none;
  color: #fff;
  font: inherit;
  font-size: 32px;
}

.camera { margin-right: 41px; }

.home {
  width: 296px;
  height: 10px;
  margin: 56px auto 0;
  border-radius: 5px;
  background: #fff;
}
```
